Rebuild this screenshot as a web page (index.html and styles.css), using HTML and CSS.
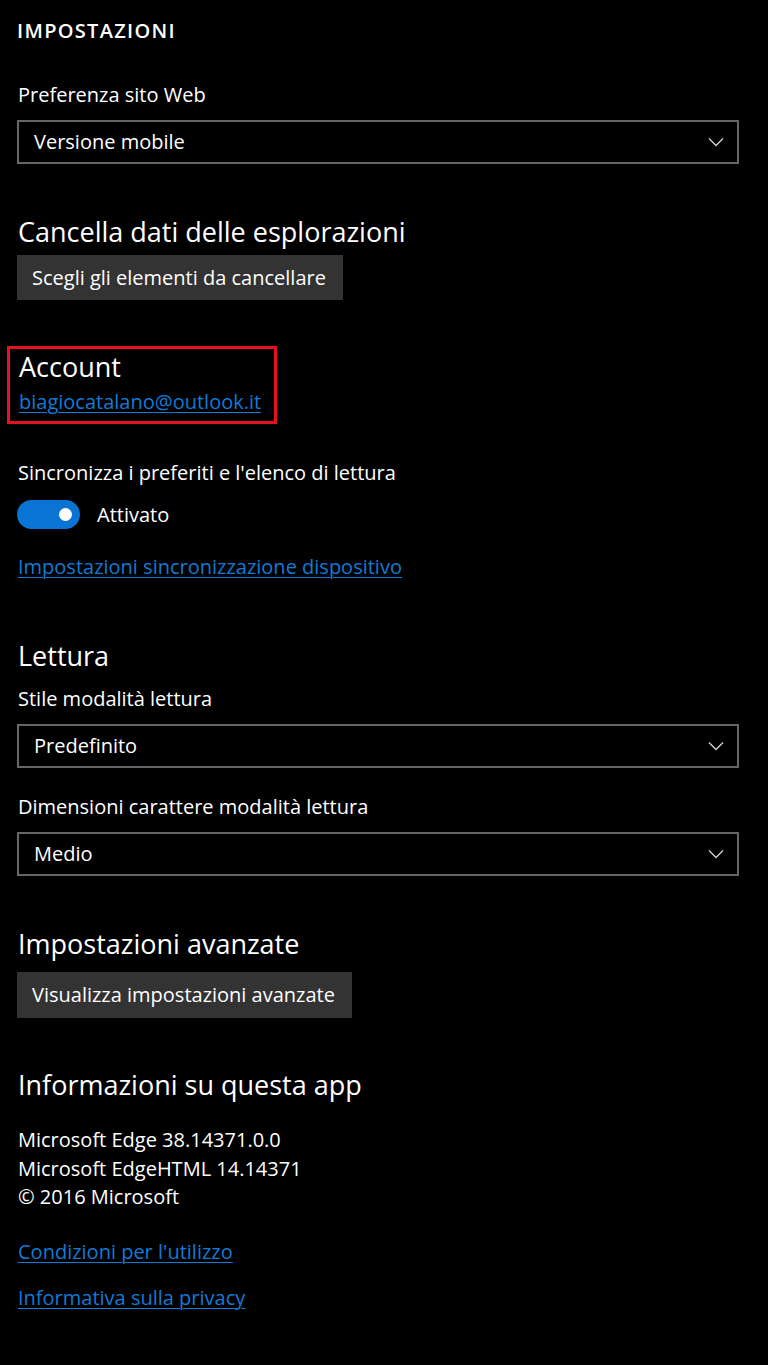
FILE: index.html
```html
<!DOCTYPE html>
<html lang="it">
<head>
<meta charset="utf-8">
<title>Impostazioni</title>
<link rel="stylesheet" href="styles.css">
</head>
<body>
<main class="page">
  <h1 class="title">IMPOSTAZIONI</h1>

  <p class="label label-first">Preferenza sito Web</p>
  <div class="select"><span>Versione mobile</span>
    <svg class="chev" viewBox="0 0 16 10" width="16" height="10"><polyline points="1,1.5 8,8.5 15,1.5"/></svg>
  </div>

  <h2 class="heading h-clear">Cancella dati delle esplorazioni</h2>
  <div class="btn">Scegli gli elementi da cancellare</div>

  <div class="account">
    <h2 class="heading h-account">Account</h2>
    <a class="link email" href="#">biagiocatalano@outlook.it</a>
  </div>

  <p class="label sync">Sincronizza i preferiti e l'elenco di lettura</p>
  <div class="toggle-row">
    <span class="toggle"><span class="knob"></span></span>
    <span class="toggle-text">Attivato</span>
  </div>
  <a class="link block-link sync-link" href="#">Impostazioni sincronizzazione dispositivo</a>

  <h2 class="heading h-read">Lettura</h2>
  <p class="label label-tight">Stile modalità lettura</p>
  <div class="select"><span>Predefinito</span>
    <svg class="chev" viewBox="0 0 16 10" width="16" height="10"><polyline points="1,1.5 8,8.5 15,1.5"/></svg>
  </div>
  <p class="label label-after-select">Dimensioni carattere modalità lettura</p>
  <div class="select"><span>Medio</span>
    <svg class="chev" viewBox="0 0 16 10" width="16" height="10"><polyline points="1,1.5 8,8.5 15,1.5"/></svg>
  </div>

  <h2 class="heading h-adv">Impostazioni avanzate</h2>
  <div class="btn btn-adv">Visualizza impostazioni avanzate</div>

  <h2 class="heading h-info">Informazioni su questa app</h2>
  <div class="about">
    <div>Microsoft Edge 38.14371.0.0</div>
    <div>Microsoft EdgeHTML 14.14371</div>
    <div>© 2016 Microsoft</div>
  </div>
  <a class="link block-link terms" href="#">Condizioni per l'utilizzo</a>
  <a class="link block-link privacy" href="#">Informativa sulla privacy</a>
</main>
</body>
</html>
```

FILE: styles.css
```css
html, body {
  margin: 0;
  padding: 0;
  background: #000;
}
body {
  color: #fff;
  font-family: "Open Sans", "Noto Sans", "Liberation Sans", sans-serif;
  font-size: 20px;
  line-height: 28px;
}
.page {
  width: 722px;
  padding: 17px 0 40px 17px;
  display: flex;
  flex-direction: column;
  align-items: flex-start;
}
.title {
  margin: 0;
  font-size: 20px;
  line-height: 28px;
  font-weight: 600;
  letter-spacing: 1.3px;
}
.label {
  margin: 0 0 0 1px;
  font-size: 20px;
  line-height: 28px;
}
.label-first { margin-top: 36px; }
.select {
  box-sizing: border-box;
  width: 722px;
  height: 44px;
  margin-top: 11px;
  border: 2px solid #666;
  display: flex;
  align-items: center;
  justify-content: space-between;
  padding: 0 13px 0 15px;
}
.chev polyline {
  fill: none;
  stroke: #d0d0d0;
  stroke-width: 1.4;
}
.heading {
  margin: 0 0 0 1px;
  font-size: 27px;
  line-height: 36px;
  font-weight: 400;
}
.h-clear { margin-top: 50px; }
.btn {
  margin-top: 5px;
  height: 45px;
  padding: 0 17px 0 15px;
  background: #333;
  display: flex;
  align-items: center;
}
.account {
  margin: 46px 0 0 -10px;
  width: 270px;
  box-sizing: border-box;
  border: 3px solid #e81123;
  padding: 0 0 5px 8px;
  display: flex;
  flex-direction: column;
  align-items: flex-start;
}
.h-account { margin-top: 0; }
.link {
  color: #117bd6;
  text-decoration: underline;
  text-underline-offset: 3px;
  text-decoration-thickness: 1px;
  font-size: 20px;
  line-height: 28px;
}
.email { margin: 3px 0 0 1px; }
.sync { margin-top: 35px; }
.toggle-row {
  margin-top: 13px;
  display: flex;
  align-items: center;
  gap: 17px;
}
.toggle {
  width: 63px;
  height: 29px;
  border-radius: 15px;
  background: #0a74d4;
  position: relative;
}
.knob {
  position: absolute;
  width: 13px;
  height: 13px;
  border-radius: 50%;
  background: #fff;
  right: 8px;
  top: 8px;
}
.toggle-text { line-height: 28px; }
.block-link { margin-left: 1px; }
.sync-link { margin-top: 24px; }
.h-read { margin-top: 57px; }
.label-tight { margin-top: 11px; }
.label-after-select { margin-top: 25px; }
.h-adv { margin-top: 50px; }
.btn-adv { margin-top: 10px; height: 46px; }
.h-info { margin-top: 49px; }
.about {
  margin: 23px 0 0 1px;
  line-height: 28.5px;
}
.terms { margin-top: 26px; }
.privacy { margin-top: 18px; }
```
